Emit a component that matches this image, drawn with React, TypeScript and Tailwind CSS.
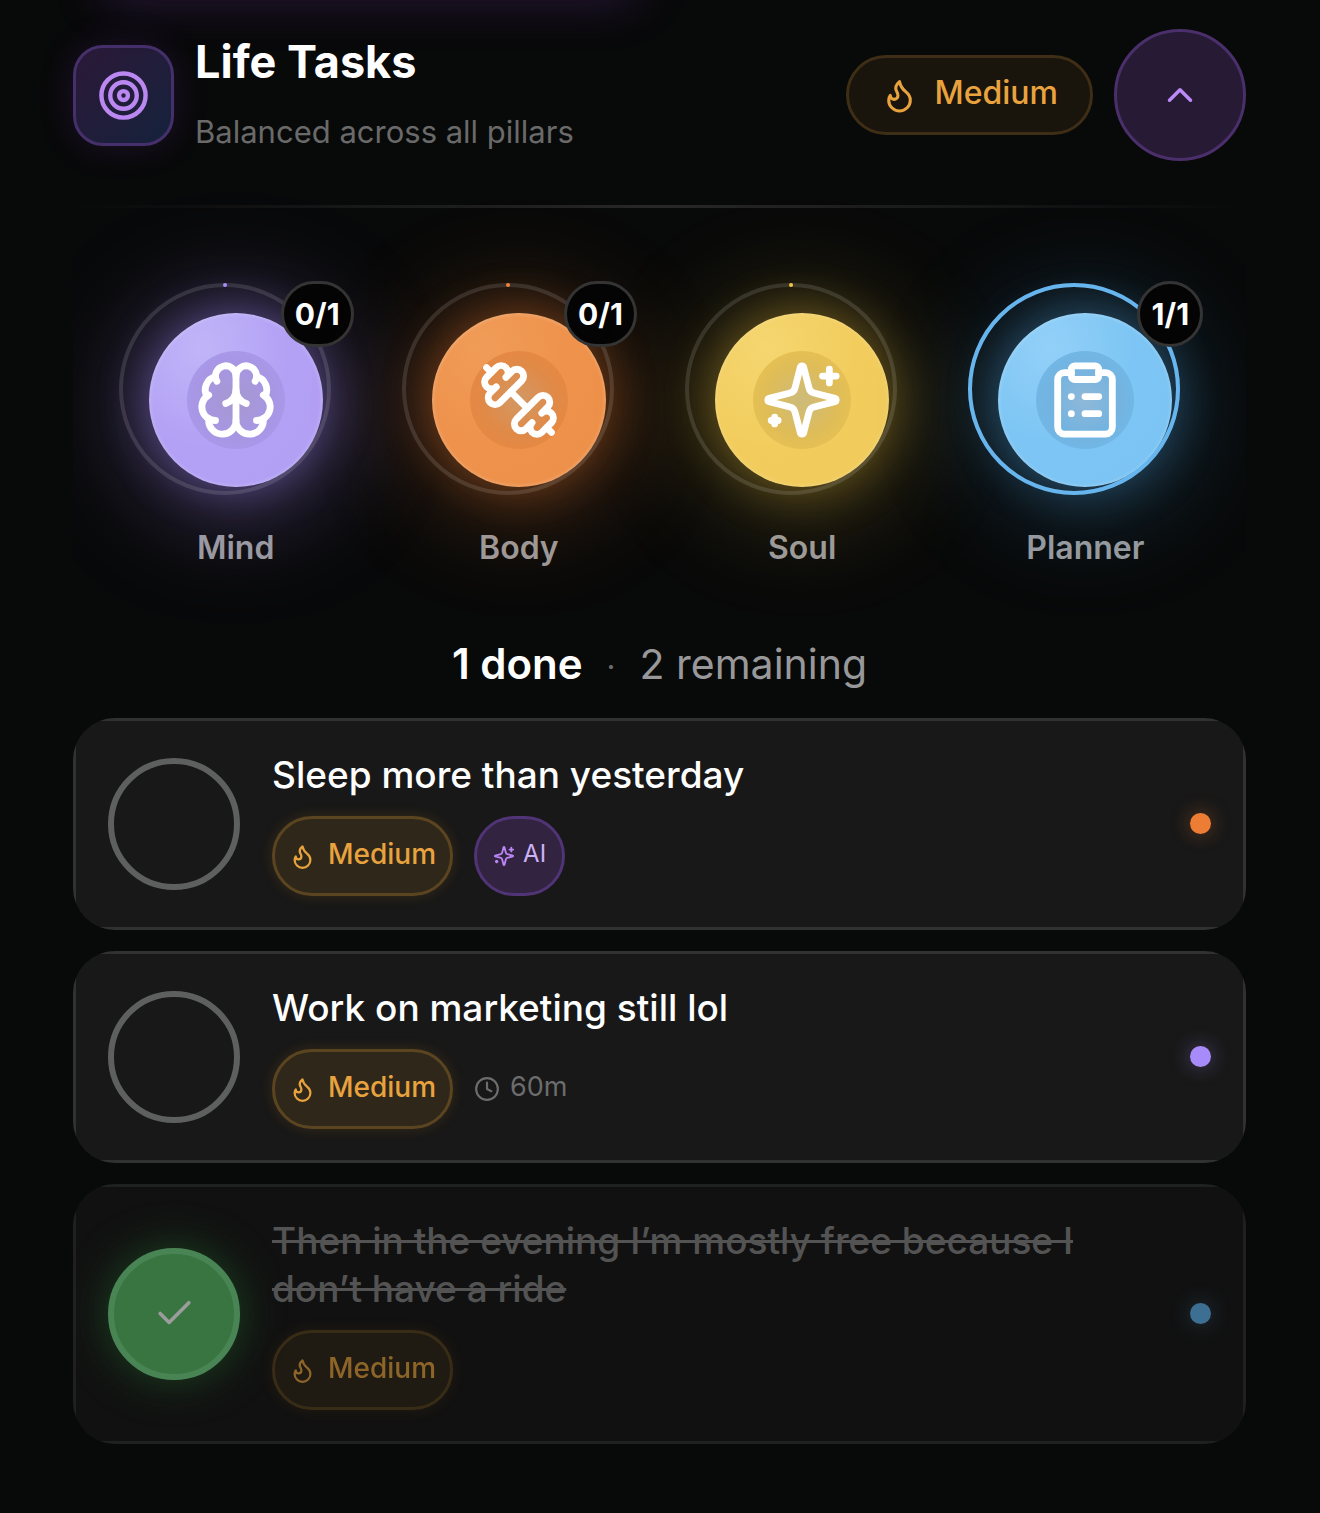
import { useState, type ReactNode } from "react";
import { Brain, Check, ChevronUp, ClipboardList, Clock, Target } from "lucide-react";

function Glyph({ className, children }: { className: string; children: ReactNode }) {
  return (
    <svg
      viewBox="0 0 24 24"
      fill="none"
      stroke="currentColor"
      strokeWidth="2"
      strokeLinecap="round"
      strokeLinejoin="round"
      aria-hidden="true"
      className={className}
    >
      {children}
    </svg>
  );
}

function Flame({ className }: { className: string }) {
  return (
    <Glyph className={className}>
      <path d="M8.5 14.5A2.5 2.5 0 0 0 11 12c0-1.38-.5-2-1-3-1.072-2.143-.224-4.054 2-6 .5 2.5 2 4.9 4 6.5 2 1.6 3 3.5 3 5.5a7 7 0 1 1-14 0c0-1.153.433-2.294 1-3a2.5 2.5 0 0 0 2.5 2.5z" />
    </Glyph>
  );
}

function Dumbbell({ className }: { className: string }) {
  return (
    <Glyph className={className}>
      <path d="M14.4 14.4 9.6 9.6" />
      <path d="M18.657 21.485a2 2 0 1 1-2.829-2.828l-1.767 1.768a2 2 0 1 1-2.829-2.829l6.364-6.364a2 2 0 1 1 2.829 2.829l-1.768 1.767a2 2 0 1 1 2.828 2.829z" />
      <path d="m21.5 21.5-1.4-1.4" />
      <path d="M3.9 3.9 2.5 2.5" />
      <path d="M6.404 12.768a2 2 0 1 1-2.829-2.829l1.768-1.767a2 2 0 1 1-2.828-2.829l2.828-2.828a2 2 0 1 1 2.829 2.828l1.767-1.768a2 2 0 1 1 2.829 2.829z" />
    </Glyph>
  );
}

function Sparkles({ className }: { className: string }) {
  return (
    <Glyph className={className}>
      <path d="M9.937 15.5A2 2 0 0 0 8.5 14.063l-6.135-1.582a.5.5 0 0 1 0-.962L8.5 9.936A2 2 0 0 0 9.937 8.5l1.582-6.135a.5.5 0 0 1 .963 0L14.063 8.5A2 2 0 0 0 15.5 9.937l6.135 1.581a.5.5 0 0 1 0 .964L15.5 14.063a2 2 0 0 0-1.437 1.437l-1.582 6.135a.5.5 0 0 1-.963 0z" />
      <path d="M20 3v4" />
      <path d="M22 5h-4" />
      <path d="M4 17v2" />
      <path d="M5 18H3" />
    </Glyph>
  );
}

const pillars = [
  {
    name: "Mind",
    count: "0/1",
    progress: 0,
    ring: "#a78bfa",
    disc: "from-[#c1b5f8] via-[#b3a1f5] to-[#b19ff4] shadow-[inset_0_0_3px_2px_rgba(255,255,255,0.15),0_0_50px_rgba(167,139,250,0.42),0_8px_110px_16px_rgba(167,139,250,0.36)]",
    core: "from-[#a698d0] via-[#a796e2] to-[#ac99f2]",
    icon: <Brain className="size-[82px]" />,
  },
  {
    name: "Body",
    count: "0/1",
    progress: 0,
    ring: "#f08040",
    disc: "from-[#f09c58] via-[#ee924c] to-[#ec8f49] shadow-[inset_0_0_3px_2px_rgba(255,255,255,0.15),0_0_50px_rgba(240,125,50,0.38),0_8px_110px_16px_rgba(240,125,50,0.3)]",
    core: "from-[#d29863] via-[#e08a48] to-[#ec873d]",
    icon: <Dumbbell className="size-[82px]" />,
  },
  {
    name: "Soul",
    count: "",
    progress: 0,
    ring: "#f0c040",
    disc: "from-[#f5d670] via-[#f2cd5e] to-[#f0cb5b] shadow-[inset_0_0_3px_2px_rgba(255,255,255,0.12),0_0_50px_rgba(230,190,60,0.38),0_8px_110px_16px_rgba(230,185,60,0.28)]",
    core: "from-[#cdbb7a] via-[#debc58] to-[#efc54d]",
    icon: <Sparkles className="size-[82px]" />,
  },
  {
    name: "Planner",
    count: "1/1",
    progress: 1,
    ring: "#66b5ee",
    disc: "from-[#93d0f8] via-[#7cc5f4] to-[#7ac3f2] shadow-[inset_0_0_3px_2px_rgba(255,255,255,0.15),0_0_50px_rgba(86,175,240,0.38),0_8px_110px_16px_rgba(70,160,225,0.28)]",
    core: "from-[#8fb8d8] via-[#73b3e0] to-[#6fbcee]",
    icon: <ClipboardList className="size-[82px]" />,
  },
];

type Pillar = (typeof pillars)[number];

function PillarButton({ pillar }: { pillar: Pillar }) {
  const length = 2 * Math.PI * 104;
  return (
    <button type="button" className="flex flex-col items-center gap-[37px]">
      <span className="relative block">
        <span
          className={`grid size-[174px] place-items-center rounded-full bg-radial-[at_30%_20%] ${pillar.disc}`}
        >
          <span
            className={`grid size-[98px] place-items-center rounded-full bg-radial text-white ${pillar.core}`}
          >
            {pillar.icon}
          </span>
        </span>
        <svg
          viewBox="0 0 212 212"
          fill="none"
          aria-hidden="true"
          className="absolute -top-[30px] -left-[30px] size-[212px] -rotate-90"
        >
          <circle cx="106" cy="106" r="104" stroke="white" strokeOpacity="0.12" strokeWidth="4" />
          <circle
            cx="106"
            cy="106"
            r="104"
            stroke={pillar.ring}
            strokeWidth="4"
            strokeLinecap="round"
            strokeDasharray={`${Math.max(pillar.progress * length, 0.1)} ${length * 2}`}
          />
        </svg>
        {pillar.count && (
          <span className="absolute -top-8 -right-[31px] flex h-[66px] min-w-[66px] items-center justify-center rounded-full border-[3px] border-[#343434] bg-[#040405] px-[11px] text-[30px] leading-none font-bold text-white">
            {pillar.count}
          </span>
        )}
      </span>
      <span className="text-[32px] leading-[48px] font-semibold text-[#9a9a9c]">{pillar.name}</span>
    </button>
  );
}

const tasks = [
  {
    id: "sleep",
    title: "Sleep more than yesterday",
    done: false,
    ai: true,
    time: "",
    dot: "bg-[#ed7d35] shadow-[0_0_20px_rgba(237,125,53,0.4)]",
  },
  {
    id: "marketing",
    title: "Work on marketing still lol",
    done: false,
    ai: false,
    time: "60m",
    dot: "bg-[#a78bfa] shadow-[0_0_20px_rgba(167,139,250,0.4)]",
  },
  {
    id: "evening",
    title: "Then in the evening I’m mostly free because I don’t have a ride",
    done: true,
    ai: false,
    time: "",
    dot: "bg-[#61b4f0] shadow-[0_0_20px_rgba(97,180,240,0.4)]",
  },
];

type Task = (typeof tasks)[number];

function TaskCard({ task }: { task: Task }) {
  const [done, setDone] = useState(task.done);
  return (
    <li className={`overflow-hidden rounded-[42px] ${done ? "opacity-60" : ""}`}>
      <div className="flex items-center gap-8 border-[3px] border-[#303131] bg-[#181818] px-8 pt-[30px] pb-[31px]">
        <span className="relative grid size-[132px] shrink-0 place-items-center">
          <input
            id={task.id}
            type="checkbox"
            checked={done}
            onChange={() => setDone(!done)}
            className="peer size-full appearance-none rounded-full border-[6px] border-[#5e5f5f] checked:border-[#75d988] checked:bg-[#5bbf68] checked:shadow-[0_0_42px_rgba(60,190,80,0.5)]"
          />
          <Check className="pointer-events-none absolute hidden size-[43px] text-white peer-checked:block" />
        </span>
        <div className="flex min-w-0 flex-1 flex-col gap-[17px]">
          <label
            htmlFor={task.id}
            className={`max-w-[820px] text-[37px] leading-[48px] font-medium ${done ? "text-[#868686] line-through" : "text-white"}`}
          >
            {task.title}
          </label>
          <div className="flex items-center gap-[21px]">
            <span className="flex h-20 items-center gap-3 rounded-full border-[3px] border-[#5b4521] bg-[#2f271a] px-[14px] text-[28px] font-medium text-[#e8a33f] shadow-[0_0_14px_rgba(230,150,30,0.15)]">
              <Flame className="size-[27px]" />
              <span className="pb-1">Medium</span>
            </span>
            {task.ai && (
              <span className="flex h-20 items-center gap-2 rounded-full border-[3px] border-[#513476] bg-[#322341] px-4 text-[24px] text-[#cdb2f5]">
                <Sparkles className="size-[22px] text-[#bb86f5]" />
                <span className="pb-1">AI</span>
              </span>
            )}
            {task.time && (
              <span className="flex items-center gap-[10px] text-[27px] text-[#6c6c6d]">
                <Clock className="size-[26px]" />
                <span className="pb-1">{task.time}</span>
              </span>
            )}
          </div>
        </div>
        <span className={`size-[21px] shrink-0 rounded-full ${task.dot}`} />
      </div>
    </li>
  );
}

export default function App() {
  const [open, setOpen] = useState(true);
  return (
    <main className="relative min-h-screen overflow-hidden bg-[#080909] pt-[29px] pr-[74px] pb-[69px] pl-[73px] font-['Inter',sans-serif]">
      <div
        aria-hidden="true"
        className="absolute -top-10 left-[100px] h-10 w-[540px] rounded-full shadow-[0_0_50px_rgba(147,70,220,0.26)]"
      />
      <header className="flex items-center justify-between gap-[21px]">
        <div className="flex items-center gap-[21px]">
          <span className="grid size-[101px] place-items-center rounded-[30px] border-[3px] border-[#45306b] bg-linear-to-br from-[#2a1838] to-[#14223c] text-[#bb88f2] shadow-[0_0_36px_rgba(147,70,220,0.16)]">
            <Target className="size-[53px]" />
          </span>
          <div>
            <h1 className="text-[45px] leading-[66px] font-bold text-white">Life Tasks</h1>
            <p className="pt-3 pb-1 text-[31px] leading-[50px] text-[#6a6a6a]">
              Balanced across all pillars
            </p>
          </div>
        </div>
        <div className="flex items-center gap-[21px]">
          <span className="flex h-20 items-center gap-4 rounded-full border-[3px] border-[#3f2e16] bg-[#19140c] px-8 text-[32px] font-medium text-[#e8a33f]">
            <Flame className="size-[37px]" />
            <span className="pb-1">Medium</span>
          </span>
          <button
            type="button"
            aria-label="Toggle tasks"
            aria-expanded={open}
            onClick={() => setOpen(!open)}
            className="grid size-[132px] place-items-center rounded-full border-[3px] border-[#4a2f6b] bg-[#271a35] text-[#ba8bf7]"
          >
            <ChevronUp className={`size-[42px] ${open ? "" : "rotate-180"}`} />
          </button>
        </div>
      </header>
      <div className="mt-11 h-[3px] bg-linear-to-r from-transparent via-[#282828] to-transparent" />
      {open && (
        <>
          <nav
            aria-label="Pillars"
            className="grid grid-cols-4 overflow-x-clip pt-[105px] pr-[19px] pl-[21px]"
          >
            {pillars.map((pillar) => (
              <PillarButton key={pillar.name} pillar={pillar} />
            ))}
          </nav>
          <p className="mt-[60px] flex items-center justify-center gap-6 text-[41px] leading-[64px] text-[#98989a]">
            <span className="text-[42px] font-semibold text-white">1 done</span>
            <span className="pt-1 text-[31px] leading-none text-[#6c6c6c]">·</span>
            <span>2 remaining</span>
          </p>
          <ul className="mt-[22px] flex flex-col gap-[21px]">
            {tasks.map((task) => (
              <TaskCard key={task.id} task={task} />
            ))}
          </ul>
        </>
      )}
    </main>
  );
}
